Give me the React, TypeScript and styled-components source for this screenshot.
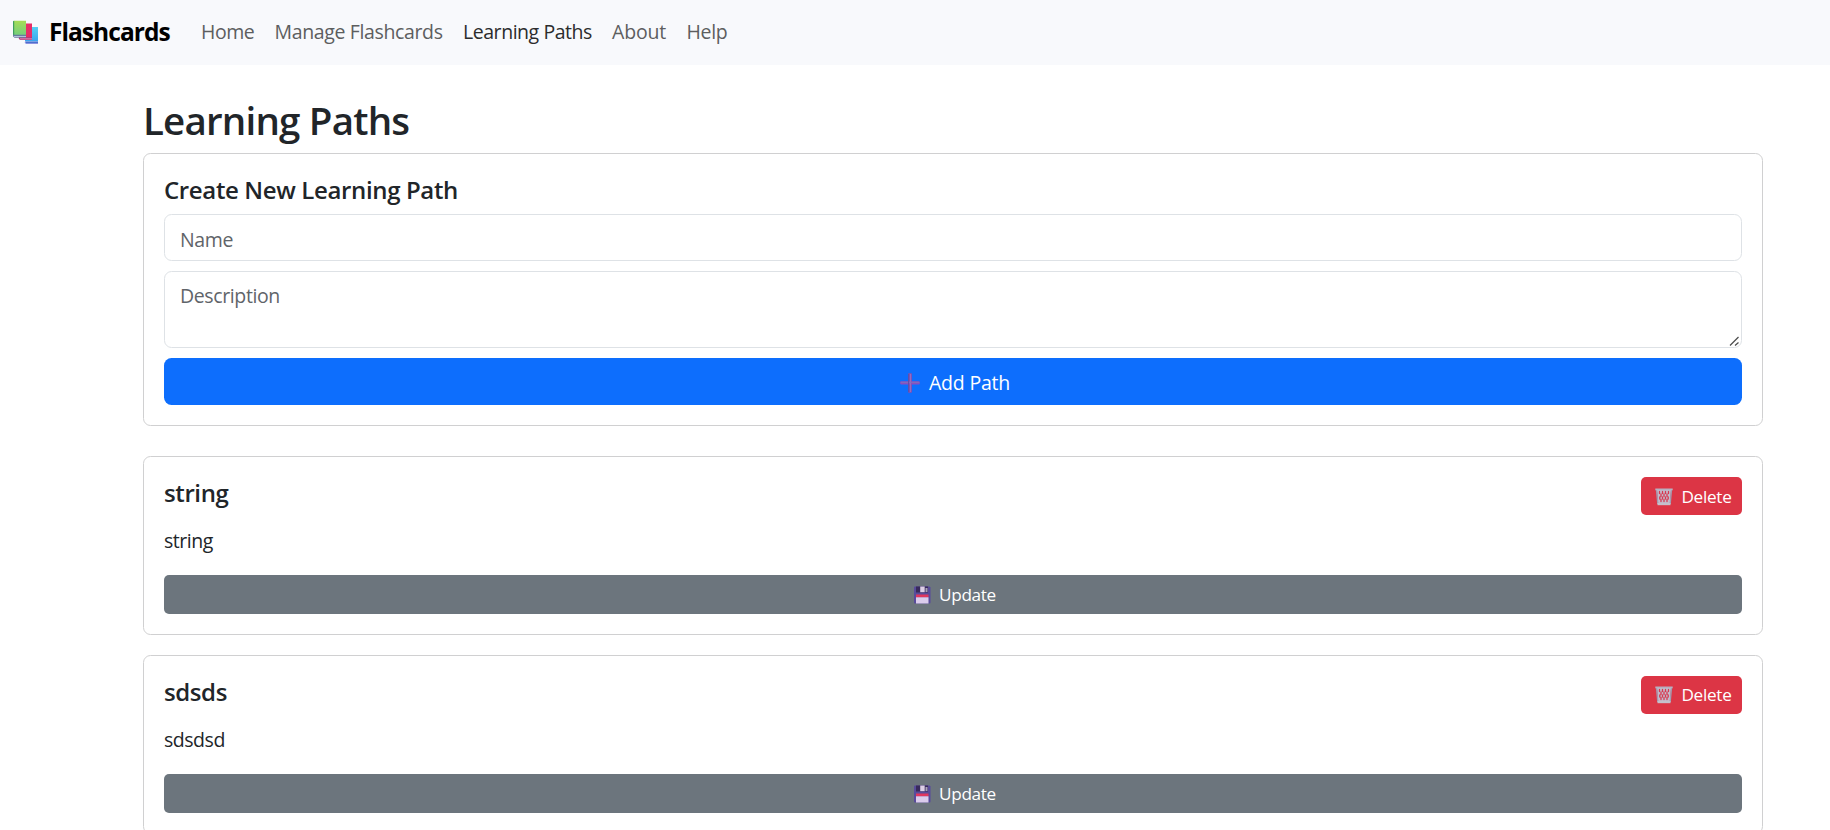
import React from "react";
import styled, { createGlobalStyle } from "styled-components";

const GlobalStyle = createGlobalStyle`
  *, *::before, *::after { box-sizing: border-box; }
  html, body { margin: 0; height: 830px; overflow: hidden; }
  body {
    background: #fff;
    color: #212529;
    font-family: "Open Sans", "Noto Sans", sans-serif;
    font-size: 19.5px;
    line-height: 30px;
  }
  h1, h5, p { margin: 0; font-weight: 500; }
`;

const Text = styled.span<{ $track?: number }>`
  letter-spacing: ${(p) => p.$track ?? -0.4}px;
  white-space: nowrap;
`;

const Navbar = styled.nav`
  display: flex;
  align-items: center;
  height: 65px;
  padding-left: 12px;
  background: #f8f9fc;
`;

const Brand = styled.a`
  display: flex;
  align-items: center;
  width: 179px;
  gap: 11px;
  color: #000;
  font-size: 24.5px;
  font-weight: 700;

  span {
    padding-bottom: 2px;
  }
`;

const NavList = styled.div`
  display: flex;
  padding-bottom: 2px;
`;

const NavLink = styled.a<{ $width: number; $active?: boolean }>`
  width: ${(p) => p.$width}px;
  padding-left: 10px;
  color: ${(p) => (p.$active ? "#2b2c2d" : "#5d5e5f")};
`;

const Page = styled.main`
  width: 1620px;
  margin: 30px 0 0 143px;
`;

const PageTitle = styled.h1`
  height: 48px;
  margin-bottom: 10px;
  font-size: 38.5px;
  line-height: 50px;
  font-weight: 600;
`;

const Card = styled.section<{ $gap: number }>`
  margin-bottom: ${(p) => p.$gap}px;
  padding: 20px;
  border: 1px solid #d0d0d1;
  border-radius: 7.5px;
`;

const CardTitle = styled.h5`
  height: 30px;
  font-size: 24px;
  line-height: 32px;
  font-weight: 600;
`;

const Form = styled.form`
  display: flex;
  flex-direction: column;
  gap: 10px;
`;

const fieldStyle = `
  display: block;
  width: 100%;
  padding: 9px 15px 5px;
  border: 1px solid #dee2e6;
  border-radius: 7.5px;
  background: #fff;
  font: inherit;
  letter-spacing: -0.38px;
  outline: none;
  &::placeholder { color: #5f6469; opacity: 1; }
`;

const Input = styled.input`
  ${fieldStyle}
  height: 47px;
`;

const AreaWrap = styled.div`
  position: relative;
  height: 77px;
`;

const TextArea = styled.textarea`
  ${fieldStyle}
  height: 77px;
  resize: none;
`;

const Grip = styled.svg`
  position: absolute;
  right: 2px;
  bottom: 1px;
`;

const Button = styled.button<{ $tone: string; $small?: boolean }>`
  display: flex;
  align-items: center;
  justify-content: center;
  gap: ${(p) => (p.$small ? 8 : 9)}px;
  width: 100%;
  height: ${(p) => (p.$small ? 38.75 : 47)}px;
  padding: ${(p) => (p.$small ? "1px 0 0 3px" : "2px 0 0 4px")};
  border: 0;
  border-radius: ${(p) => (p.$small ? 5 : 7.5)}px;
  background: ${(p) => p.$tone};
  color: #fff;
  font-family: inherit;
  font-size: ${(p) => (p.$small ? 17.2 : 19.5)}px;
  line-height: 26px;
`;

const DeleteButton = styled(Button)`
  width: 101px;
  height: 38px;
  padding-left: 4px;
`;

const CardHeader = styled.div`
  display: flex;
  justify-content: space-between;
  height: 38px;
  margin-bottom: 10px;
`;

const Description = styled.p`
  height: 30px;
  margin-bottom: 20px;
  line-height: 32px;
  font-weight: 400;
`;

const BooksIcon = () => (
  <svg width="26" height="26" viewBox="0 0 26 26">
    <defs>
      <linearGradient id="green" x2="0" y2="1">
        <stop stopColor="#a5dc55" />
        <stop offset="1" stopColor="#74ce7c" />
      </linearGradient>
      <linearGradient id="blue" x2="0" y2="1">
        <stop stopColor="#55d0f3" />
        <stop offset="1" stopColor="#3aa5ed" />
      </linearGradient>
    </defs>
    <path d="M13 7h13v14.500H13z" fill="url(#blue)" />
    <path d="M13 21.500h13v2.600H14q-2-1.300-1-2.600z" fill="#8e93df" />
    <path d="M14 21.800h12v1H14z" fill="#3a67c9" />
    <path d="M8 3.500h12v15H8z" fill="#e72d67" />
    <path d="M7 17h13v3H8q-2-1.500-1-3z" fill="#b43a79" />
    <path d="M8 18.500h12v.8H8z" fill="#e9a2ca" />
    <path d="M1 2Q1 .8 2.200.8H14v14.500H1z" fill="url(#green)" />
    <path d="M1 2Q1 .8 2.200.8v14.500H1z" fill="#3e9e61" />
    <path d="M1 14.800h13v3H2.500Q.5 16.800 1 14.800z" fill="#687ba0" />
    <path d="M2 16h12v1H2z" fill="#b5bfda" />
  </svg>
);

const PlusIcon = () => (
  <svg width="20" height="20" viewBox="0 0 20 20">
    <path d="M8 1q0-1 2-1t2 1v18q0 1-2 1t-2-1z" fill="#7952b8" />
    <path d="M1 8.300h18q1 0 1 1.500t-1 1.700H1q-1 0-1-1.700t1-1.500z" fill="#8750bf" />
    <path d="M10.500 1v18" stroke="#936cc2" strokeWidth="1" />
    <path d="M1 9.300h18" stroke="#8070bc" strokeWidth="1" />
    <path d="M8.500 1v18" stroke="#6050a8" strokeWidth="1" />
  </svg>
);

const TrashIcon = () => (
  <svg width="18" height="18" viewBox="0 0 18 18">
    <path d="M2 2h14l-1.200 14H3.200z" fill="#c3bccb" />
    <path
      d="M4.500 3.500v2M7.500 3.500v2M10.500 3.500v2M13.500 3.500v2M6 6v2.500M9 6v2.500M12 6v2.500M4.800 9v2M7.500 9v2M10.500 9v2M13.200 9v2M6 11.500v2M9 11.500v2M12 11.500v2"
      fill="none"
      stroke="#d83850"
      strokeWidth="1.300"
      strokeLinecap="round"
    />
    <path d="M1.500 2l1.300 14M16.500 2l-1.300 14" stroke="#a29bb0" strokeWidth="1.300" />
    <path d="M.3.500h17.400v1.800H.3z" fill="#b7b0c0" />
    <path d="M2.500 15h13v2.200h-13z" fill="#c5c0cb" />
  </svg>
);

const DiskIcon = () => (
  <svg width="18" height="18" viewBox="0 0 18 18">
    <path d="M1 1.200Q1 .5 2 .5h14.500l1 1v15q0 1-1 1H2q-1 0-1-1z" fill="#584b9b" />
    <path d="M3 .5h12v6H3z" fill="#382a5d" />
    <path d="M7.200.5h4.500v5.700H7.200z" fill="#ddcfe6" />
    <path d="M12.500 2h2v4h-2z" fill="#aaa1b9" />
    <path d="M3 8.500h12.500v3H3z" fill="#e0365e" />
    <path d="M3 11.300h12.500v6.200H3z" fill="#dbccec" />
  </svg>
);

const GripIcon = () => (
  <Grip width="11" height="11" viewBox="0 0 11 11">
    <path d="M1 9.500L9.500 1M6 9.500L9.500 6.500" stroke="#505050" strokeWidth="1.300" fill="none" />
  </Grip>
);

const links = [
  { label: "Home", width: 73.5, track: -0.45 },
  { label: "Manage Flashcards", width: 188.5, track: -0.36 },
  { label: "Learning Paths", width: 149, track: -0.45 },
  { label: "About", width: 74.5, track: -0.15 },
  { label: "Help", width: 60, track: -0.3 },
];

const paths = [
  { name: "string", description: "string" },
  { name: "sdsds", description: "sdsdsd" },
];

export default function App() {
  return (
    <>
      <GlobalStyle />
      <Navbar>
        <Brand>
          <BooksIcon />
          <Text $track={-0.95}>Flashcards</Text>
        </Brand>
        <NavList>
          {links.map((l) => (
            <NavLink key={l.label} $width={l.width} $active={l.label === "Learning Paths"}>
              <Text $track={l.track}>{l.label}</Text>
            </NavLink>
          ))}
        </NavList>
      </Navbar>
      <Page>
        <PageTitle>
          <Text $track={-0.8}>Learning Paths</Text>
        </PageTitle>
        <Card $gap={30}>
          <Form>
            <CardTitle>
              <Text $track={-0.36}>Create New Learning Path</Text>
            </CardTitle>
            <Input placeholder="Name" />
            <AreaWrap>
              <TextArea placeholder="Description" />
              <GripIcon />
            </AreaWrap>
            <Button type="button" $tone="#0d6efd">
              <PlusIcon />
              <Text $track={-0.2}>Add Path</Text>
            </Button>
          </Form>
        </Card>
        {paths.map((p) => (
          <Card key={p.name} $gap={20}>
            <CardHeader>
              <CardTitle>
                <Text>{p.name}</Text>
              </CardTitle>
              <DeleteButton $tone="#dc3545" $small>
                <TrashIcon />
                <Text $track={-0.3}>Delete</Text>
              </DeleteButton>
            </CardHeader>
            <Description>
              <Text $track={-0.47}>{p.description}</Text>
            </Description>
            <Button $tone="#6c757d" $small>
              <DiskIcon />
              <Text $track={-0.35}>Update</Text>
            </Button>
          </Card>
        ))}
      </Page>
    </>
  );
}
